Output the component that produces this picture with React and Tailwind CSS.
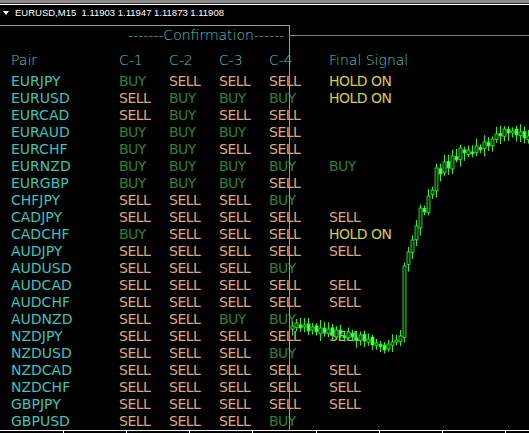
import React from "react";

const ROWS = [
  ["EURJPY", "BUY", "SELL", "SELL", "SELL", "HOLD ON"],
  ["EURUSD", "SELL", "BUY", "BUY", "BUY", "HOLD ON"],
  ["EURCAD", "SELL", "BUY", "SELL", "SELL", ""],
  ["EURAUD", "BUY", "BUY", "BUY", "SELL", ""],
  ["EURCHF", "BUY", "BUY", "SELL", "SELL", ""],
  ["EURNZD", "BUY", "BUY", "BUY", "BUY", "BUY"],
  ["EURGBP", "BUY", "BUY", "BUY", "SELL", ""],
  ["CHFJPY", "SELL", "SELL", "SELL", "BUY", ""],
  ["CADJPY", "SELL", "SELL", "SELL", "SELL", "SELL"],
  ["CADCHF", "BUY", "SELL", "SELL", "SELL", "HOLD ON"],
  ["AUDJPY", "SELL", "SELL", "SELL", "SELL", "SELL"],
  ["AUDUSD", "SELL", "SELL", "SELL", "BUY", ""],
  ["AUDCAD", "SELL", "SELL", "SELL", "SELL", "SELL"],
  ["AUDCHF", "SELL", "SELL", "SELL", "SELL", "SELL"],
  ["AUDNZD", "SELL", "SELL", "BUY", "BUY", ""],
  ["NZDJPY", "SELL", "SELL", "SELL", "SELL", "SELL"],
  ["NZDUSD", "SELL", "SELL", "SELL", "BUY", ""],
  ["NZDCAD", "SELL", "SELL", "SELL", "SELL", "SELL"],
  ["NZDCHF", "SELL", "SELL", "SELL", "SELL", "SELL"],
  ["GBPJPY", "SELL", "SELL", "SELL", "SELL", "SELL"],
  ["GBPUSD", "SELL", "SELL", "SELL", "BUY", ""],
];

const SIGNAL_COLOR = {
  BUY: "text-[#2e7f38]",
  SELL: "text-[#dfa978]",
  "HOLD ON": "text-[#d3cf42]",
};

// close price (as y pixel) of each M15 bar, one every 4px from x=290
const MIDS = [
  326, 323, 328, 325, 331, 327, 332, 328, 333, 329, 335, 330, 334, 338, 332, 337, 340, 335, 341, 339,
  345, 343, 346, 350, 344, 342, 340, 336, 266, 252, 240, 226, 208, 212, 196, 190, 168, 174, 162, 168,
  156, 160, 148, 153, 150, 154, 146, 150, 142, 146, 139, 134, 136, 129, 133, 131, 135, 132, 138, 136,
];

function noise(i) {
  const s = Math.sin(i * 12.9898 + 4.1) * 43758.5453;
  return s - Math.floor(s);
}

function Chart() {
  const bars = MIDS.map((close, i) => {
    const open = i === 0 ? close + 3 : MIDS[i - 1] + (noise(i + 50) - 0.5) * 4;
    const top = Math.min(open, close);
    const bottom = Math.max(open, close, top + 2);
    const high = top - 2 - noise(i) * 6;
    const low = bottom + 2 + noise(i + 9) * 6;
    return { x: 291 + i * 4, top, bottom, high, low, up: close < open };
  });

  return (
    <svg className="absolute inset-0 pointer-events-none" width="529" height="433" viewBox="0 0 529 433">
      <line x1="0" y1="25.5" x2="289" y2="25.5" stroke="#9c9c9c" />
      <line x1="289.5" y1="25" x2="289.5" y2="430" stroke="#9c9c9c" />
      <line x1="289" y1="35.5" x2="529" y2="35.5" stroke="#7d7d7d" />
      {bars.map((b) => (
        <g key={b.x}>
          <line x1={b.x + 1.5} y1={b.high} x2={b.x + 1.5} y2={b.low} stroke="#2bf02b" strokeWidth="1" />
          <rect
            x={b.x}
            y={b.top}
            width="3"
            height={b.bottom - b.top}
            fill={b.up ? "#0a2a0a" : "#4cff4c"}
            stroke="#2bf02b"
            strokeWidth="0.8"
          />
        </g>
      ))}
      {[313, 378, 443, 508].map((x) => (
        <rect key={x} x={x} y="426" width="1" height="1" fill="#5a5a5a" />
      ))}
      <line x1="0" y1="430.5" x2="529" y2="430.5" stroke="#ffffff" />
      {[63, 126, 189, 252, 316, 379, 442, 505].map((x) => (
        <line key={x} x1={x + 0.5} y1="430" x2={x + 0.5} y2="433" stroke="#ffffff" />
      ))}
    </svg>
  );
}

export default function App() {
  return (
    <div className="relative w-[529px] h-[433px] bg-black overflow-hidden flex flex-col">
      <div className="h-[3px] bg-[#8c8c8c]" />
      <div className="h-px bg-[#2a2a2a]" />
      <div className="h-px bg-white" />

      {/* symbol line */}
      <div className="h-[16px] flex items-center pl-[3px] font-['Liberation_Sans',Arial,sans-serif] text-[9.5px] text-white whitespace-pre">
        <svg width="6" height="4" viewBox="0 0 6 4" className="mr-[6px]">
          <path d="M0 0h6L3 4z" fill="#ffffff" />
        </svg>
        <span>EURUSD,M15  1.11903 1.11947 1.11873 1.11908</span>
      </div>

      <main className="flex-1 pt-[6px] font-['DejaVu_Sans',sans-serif] text-[14px] leading-[17px]">
        <div className="h-[17px] pl-[128px] text-[#4ccdbf] whitespace-pre font-light">-------Confirmation------</div>

        <div className="mt-[8px] grid grid-cols-[108px_50px_50px_50px_60px_1fr] pl-[11px] text-[#4ccdc2] font-light">
          <span>Pair</span>
          <span>C-1</span>
          <span>C-2</span>
          <span>C-3</span>
          <span>C-4</span>
          <span>Final Signal</span>
        </div>

        <div className="mt-[4px]">
          {ROWS.map(([pair, ...signals]) => (
            <div key={pair} className="h-[17px] grid grid-cols-[108px_50px_50px_50px_60px_1fr] pl-[11px]">
              <span className="text-[#3cc4bb]">{pair}</span>
              {signals.map((s, i) => (
                <span key={i} className={`tracking-[-0.5px] ${SIGNAL_COLOR[s] || ""}`}>
                  {s}
                </span>
              ))}
            </div>
          ))}
        </div>
      </main>
      <div className="h-[3px]" />

      <Chart />
    </div>
  );
}
